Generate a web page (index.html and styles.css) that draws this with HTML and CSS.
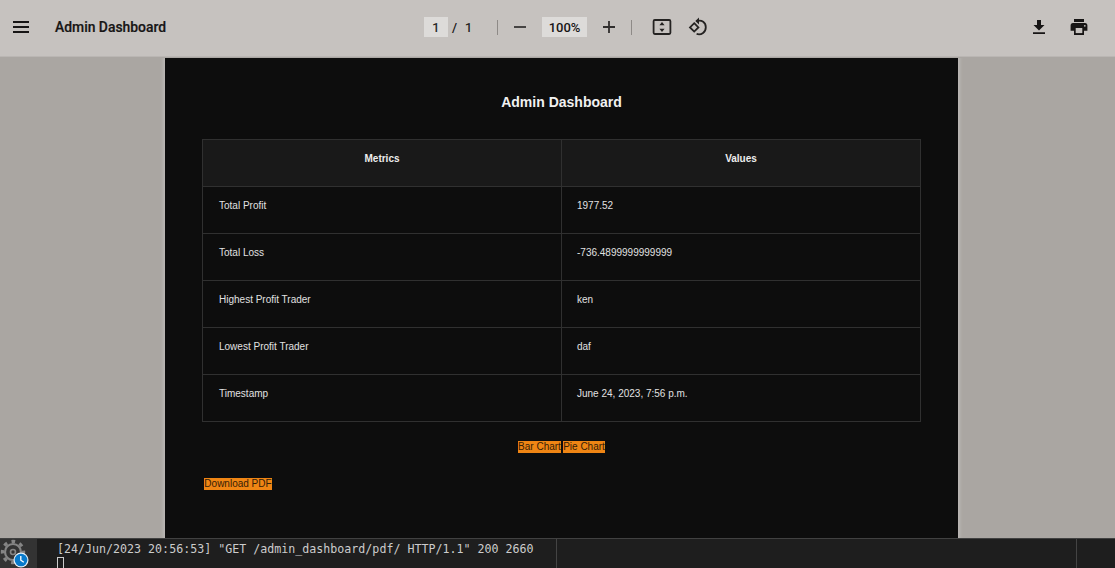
FILE: index.html
```html
<!DOCTYPE html>
<html lang="en">
<head>
<meta charset="utf-8">
<title>Admin Dashboard</title>
<link rel="stylesheet" href="styles.css">
</head>
<body>
<header class="toolbar">
  <div class="toolbar-left">
    <svg class="menu" width="16" height="12" viewBox="0 0 16 12"><path d="M0 1h16M0 6h16M0 11h16" stroke="#171515" stroke-width="2"/></svg>
    <span class="file-name">Admin Dashboard</span>
  </div>
  <div class="toolbar-center">
    <span class="field page-number">1</span>
    <span class="slash">/</span>
    <span class="total">1</span>
    <span class="separator"></span>
    <svg class="minus" width="12" height="12" viewBox="0 0 12 12"><path d="M0 6h12" stroke="#302e2d" stroke-width="1.7"/></svg>
    <span class="field zoom">100%</span>
    <svg class="plus" width="12" height="12" viewBox="0 0 12 12"><path d="M0 6h12M6 0v12" stroke="#302e2d" stroke-width="1.8"/></svg>
    <span class="separator"></span>
    <svg class="fit" width="20" height="16" viewBox="0 0 20 16"><rect x="1.6" y="1" width="16.8" height="14" rx="1.2" fill="none" stroke="#242221" stroke-width="1.8"/><path d="M10 2.9l2.6 3.3H7.4zM10 13.1l2.6-3.3H7.4z" fill="#242221"/></svg>
    <svg class="rotate" width="20" height="20" viewBox="0 0 20 20"><path d="M6.2 6.2l4.2 4.2-4.2 4.2L2 10.4zM8.5 4.2c5.4-2 9.3 1.4 9.3 6 0 4.8-4.3 8.2-9.2 6.7" fill="none" stroke="#242221" stroke-width="1.8"/><path d="M11 .6v7L7.3 4.1z" fill="#242221"/></svg>
  </div>
  <div class="toolbar-right">
    <svg width="12" height="16" viewBox="0 0 12 16"><path d="M4 1h4v5h3.5L6 11.5.5 6H4zM0 13.2h12V15H0z" fill="#171515"/></svg>
    <svg width="18" height="16" viewBox="0 0 18 16"><path d="M4 0h10v3H4zM3 4h12q2.4 0 2.4 2.6v5.2H14V16H4v-4.2H.6V6.6Q.6 4 3 4z" fill="#171515"/><path d="M5.7 9h6.6v5.1H5.7z" fill="#c6c2bf"/><circle cx="14.8" cy="6.8" r=".9" fill="#c6c2bf"/></svg>
  </div>
</header>
<main class="viewer">
  <article class="page">
    <h1 class="title">Admin Dashboard</h1>
    <table class="metrics">
      <thead><tr><th>Metrics</th><th>Values</th></tr></thead>
      <tbody>
        <tr><td>Total Profit</td><td>1977.52</td></tr>
        <tr><td>Total Loss</td><td>-736.4899999999999</td></tr>
        <tr><td>Highest Profit Trader</td><td>ken</td></tr>
        <tr><td>Lowest Profit Trader</td><td>daf</td></tr>
        <tr><td>Timestamp</td><td>June 24, 2023, 7:56 p.m.</td></tr>
      </tbody>
    </table>
    <div class="charts"><span class="link bar-link">Bar Chart</span><span class="link pie-link">Pie Chart</span></div>
    <div class="download"><span class="link download-link">Download PDF</span></div>
  </article>
</main>
<footer class="terminal">
  <div class="activity">
    <svg width="37" height="29" viewBox="0 0 37 29"><g fill="none" stroke="#858585"><circle cx="13" cy="13" r="8" stroke-width="2.2"/><circle cx="13" cy="13" r="2.5" stroke-width="1.6"/><circle cx="13" cy="13" r="10.6" stroke-width="3.2" stroke-dasharray="3.7 4.625" stroke-dashoffset="1.85"/></g><circle cx="21" cy="21" r="7.5" fill="#e4eef5"/><circle cx="21" cy="21" r="6.3" fill="#087acb"/><path d="M20.8 17v4.2l3 2" fill="none" stroke="#fff" stroke-width="1.3"/></svg>
  </div>
  <div class="console"><div class="log">[24/Jun/2023 20:56:53] "GET /admin_dashboard/pdf/ HTTP/1.1" 200 2660</div><div class="cursor"></div></div>
  <div class="panel"></div>
</footer>
</body>
</html>
```
FILE: styles.css
```css
* { box-sizing: border-box; }
body { margin: 0; width: 1115px; height: 568px; overflow: hidden; display: flex; flex-direction: column; background: #aaa6a2; font-family: "Liberation Sans", Arial, sans-serif; }
svg { display: block; flex: none; }
.toolbar { height: 57px; flex: none; display: grid; grid-template-columns: 424px 1fr 83px; background: #c6c2bf; color: #171515; font-family: Roboto, sans-serif; border-bottom: 1px solid #bab6b3; }
.toolbar > div { display: flex; align-items: center; height: 54px; }
.toolbar-left { padding-left: 13px; }
.file-name { margin-left: 26px; font-size: 13.9px; font-weight: 500; -webkit-text-stroke: .2px #171515; line-height: 20px; }
.toolbar-center { font-size: 13px; font-weight: 500; }
.field { background: #dddbd9; height: 20px; line-height: 21px; text-align: center; flex: none; }
.page-number { width: 24px; font-weight: 400; -webkit-text-stroke: .2px #171515; }
.slash { margin-left: 4px; width: 6px; }
.total { margin-left: 7px; width: 9px; font-weight: 400; -webkit-text-stroke: .2px #171515; }
.separator { width: 1px; height: 15px; margin-left: 23px; background: #8e8a87; }
.minus { margin-left: 16px; }
.zoom { width: 45px; margin-left: 16px; font-size: 13px; }
.plus { margin-left: 16px; }
.plus + .separator { margin-left: 16px; }
.fit { margin-left: 20px; }
.rotate { margin-left: 16px; }
.toolbar-right { gap: 25px; padding-left: 1px; }
.viewer { height: 481px; flex: none; padding: 1px 157px 0 165px; background: #aaa6a2; }
.page { height: 480px; padding: 35px 37px 0; background: #0d0d0d; color: #e1e1e1; box-shadow: 0 0 3px 2px #bbb8b5; clip-path: inset(0 -5px); }
.title { margin: 0; text-align: center; font-size: 14px; line-height: 18px; color: #f1f1f1; }
.metrics { margin: 28px 0 0; width: 719px; height: 283px; border-collapse: collapse; table-layout: fixed; font-size: 10px; line-height: 12px; }
.metrics th, .metrics td { height: 47px; padding: 13px 16px 21px; border: 1px solid #303030; text-align: left; vertical-align: top; }
.metrics td:last-child { padding-left: 15px; }
.metrics th { background: #191919; text-align: center; color: #ededed; }
.charts { display: flex; justify-content: center; gap: 2px; margin-top: 19px; height: 12px; }
.link { background: #ef8514; color: #352007; font-size: 10px; line-height: 12px; height: 12px; white-space: nowrap; text-align: center; }
.bar-link { width: 43px; }
.pie-link { width: 42px; }
.download { display: flex; padding-left: 2px; margin-top: 25px; }
.download-link { width: 68px; }
.terminal { display: grid; grid-template-columns: 37px 520px 520px 1fr; flex: 1; border-top: 1px solid #414141; background: #1e1e1e; }
.activity { background: #333; }
.console { border-right: 1px solid #444; padding: 2px 0 0 20px; }
.log { font: 11.65px/16px "DejaVu Sans Mono", monospace; white-space: pre; color: #ccc; }
.cursor { width: 7px; height: 15px; border: 1px solid #ccc; }
.panel { border-right: 1px solid #444; }
```
